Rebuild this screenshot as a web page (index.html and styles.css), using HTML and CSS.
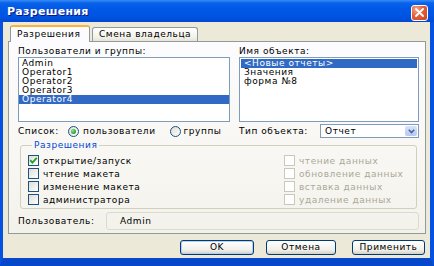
FILE: index.html
```html
<!DOCTYPE html>
<html lang="ru">
<head>
    <meta charset="UTF-8">
    <title>Разрешения</title>
    <link rel="stylesheet" href="styles.css">
</head>
<body>
<div class="window">
    <!-- Заголовок окна -->
    <div class="titlebar">
        <span class="title">Разрешения</span>
        <span class="close">
            <svg width="9" height="9" viewBox="0 0 9 9"><path d="M1 1 L8 8 M8 1 L1 8" stroke="#fff" stroke-width="1.8" stroke-linecap="round"/></svg>
        </span>
    </div>
    <div class="frame">
        <div class="tabs">
            <div class="tab active">Разрешения</div>
            <div class="tab">Смена владельца</div>
        </div>
        <div class="panel">
            <div class="lists">
                <div class="col col-left">
                    <div class="label">Пользователи и группы:</div>
                    <div class="listbox">
                        <div class="item">Admin</div>
                        <div class="item">Operator1</div>
                        <div class="item">Operator2</div>
                        <div class="item">Operator3</div>
                        <div class="item sel">Operator4</div>
                    </div>
                </div>
                <div class="col col-right">
                    <div class="label">Имя объекта:</div>
                    <div class="listbox objects">
                        <div class="item sel">&lt;Новые отчеты&gt;</div>
                        <div class="item">Значения</div>
                        <div class="item">форма №8</div>
                    </div>
                </div>
            </div>
            <div class="options">
                <div class="opt-left">
                    <span class="opt-label">Список:</span>
                    <span class="radio on"></span><span>пользователи</span>
                    <span class="radio second"></span><span>группы</span>
                </div>
                <div class="opt-right">
                    <span>Тип объекта:</span>
                    <div class="combo">
                        <span>Отчет</span>
                        <span class="combo-btn">
                            <svg width="7" height="5" viewBox="0 0 7 5"><path d="M0.8 0.8 L3.5 3.6 L6.2 0.8" fill="none" stroke="#4d6185" stroke-width="1.5"/></svg>
                        </span>
                    </div>
                </div>
            </div>
            <fieldset class="group">
                <legend>Разрешения</legend>
                <div class="checks">
                    <div class="check-col">
                        <div class="check"><span class="box checked"><svg width="9" height="9" viewBox="0 0 9 9"><path d="M1.2 4.2 L3.4 6.6 L7.8 1.8" fill="none" stroke="#21a121" stroke-width="1.8"/></svg></span>открытие/запуск</div>
                        <div class="check"><span class="box"></span>чтение макета</div>
                        <div class="check"><span class="box"></span>изменение макета</div>
                        <div class="check"><span class="box"></span>администратора</div>
                    </div>
                    <div class="check-col disabled">
                        <div class="check"><span class="box"></span>чтение данных</div>
                        <div class="check"><span class="box"></span>обновление данных</div>
                        <div class="check"><span class="box"></span>вставка данных</div>
                        <div class="check"><span class="box"></span>удаление данных</div>
                    </div>
                </div>
            </fieldset>
            <div class="user-row">
                <span class="user-label">Пользователь:</span>
                <div class="user-field">Admin</div>
            </div>
        </div>
        <div class="buttons">
            <div class="btn btn-ok">OK</div>
            <div class="btn btn-cancel">Отмена</div>
            <div class="btn btn-apply">Применить</div>
        </div>
    </div>
</div>
</body>
</html>
```

FILE: styles.css
```css
body {
    margin: 0;
    font-family: "DejaVu Sans", Verdana, sans-serif;
    font-size: 9px;
    letter-spacing: 0.55px;
    color: #000;
    background: #fff;
}
.window {
    width: 434px;
    height: 266px;
    display: flex;
    flex-direction: column;
    overflow: hidden;
}
/* Заголовок */
.titlebar {
    height: 22px;
    flex: none;
    display: flex;
    align-items: center;
    padding: 0 6px 0 7px;
    background: linear-gradient(180deg, #3a8cf6 0, #0862e9 3px, #0058e6 9px, #0055e3 16px, #0049d0 22px);
}
.title {
    flex: 1;
    color: #fff;
    font-weight: bold;
    font-size: 11px;
    letter-spacing: 0.3px;
    text-shadow: 1px 1px 0 #0a1883;
    margin-top: 1px;
}
.close {
    width: 15px;
    height: 14px;
    margin-top: 3px;
    border: 1px solid #fff;
    border-radius: 3px;
    background: radial-gradient(circle at 30% 25%, #f3a58a 0, #e4603a 45%, #c8441e 100%);
    display: flex;
    align-items: center;
    justify-content: center;
}
/* Рамка окна */
.frame {
    flex: 1;
    background: #ece9d8;
    border-left: 3px solid #0552e0;
    border-right: 4px solid #0552e0;
    border-bottom: 8px solid #0747c9;
    padding: 0 4px 0 5px;
    display: flex;
    flex-direction: column;
}
.tabs {
    display: flex;
    align-items: flex-end;
    height: 16px;
    margin-top: 3px;
    padding-left: 2px;
}
.tab {
    height: 13px;
    line-height: 13px;
    padding: 0 6px;
    border: 1px solid #919b9c;
    border-bottom: none;
    border-radius: 3px 3px 0 0;
    background: linear-gradient(#fff, #f3f1ea 70%, #e6e3d6);
    margin-left: 2px;
}
.tab.active {
    height: 15px;
    line-height: 14px;
    width: 66px;
    margin-left: 0;
    margin-bottom: -1px;
    border-top: 2px solid #f9b33d;
    background: #fcfcfe;
    position: relative;
    z-index: 1;
}
.panel {
    height: 193px;
    box-sizing: border-box;
    border: 1px solid #919b9c;
    background: linear-gradient(#fcfcfe, #f7f6f1 70%, #f2f1ea);
    padding: 4px 6px 0 9px;
}
.lists {
    display: flex;
    gap: 9px;
}
.col-left {
    width: 212px;
}
.col-right {
    width: 180px;
}
.label {
    height: 11px;
    line-height: 11px;
}
.listbox {
    height: 65px;
    box-sizing: border-box;
    border: 1px solid #7f9db9;
    background: #fff;
    padding-top: 1px;
}
.item {
    height: 9px;
    line-height: 9px;
    padding-left: 3px;
    white-space: nowrap;
}
.item.sel {
    background: #316ac5;
    color: #fff;
}
.objects .item {
    padding-left: 4px;
}
.objects .item.sel {
    margin: 0 1px;
    padding-left: 3px;
}
/* Список / тип объекта */
.options {
    display: flex;
    justify-content: space-between;
    align-items: center;
    height: 14px;
    margin-top: 2px;
}
.opt-left,
.opt-right {
    display: flex;
    align-items: center;
}
.opt-label {
    width: 50px;
}
.radio {
    width: 9px;
    height: 9px;
    border: 1px solid #1c5180;
    border-radius: 50%;
    background: linear-gradient(135deg, #dcdcd7, #fff);
    margin-right: 4px;
    display: flex;
    align-items: center;
    justify-content: center;
}
.radio.on::after {
    content: "";
    width: 5px;
    height: 5px;
    border-radius: 50%;
    background: radial-gradient(circle at 35% 35%, #8ee28e, #21a121 70%);
}
.radio.second {
    margin-left: 14px;
    margin-right: 3px;
}
.opt-right {
    width: 180px;
}
.combo {
    margin-left: auto;
    width: 99px;
    height: 14px;
    box-sizing: border-box;
    border: 1px solid #7f9db9;
    background: #fff;
    display: flex;
    align-items: center;
    padding-left: 4px;
}
.combo span:first-child {
    flex: 1;
}
.combo-btn {
    width: 12px;
    height: 10px;
    margin-right: 1px;
    border-radius: 2px;
    background: linear-gradient(#d7e3fd, #b4c8f6);
    display: flex;
    align-items: center;
    justify-content: center;
}
/* Группа разрешений */
.group {
    margin: 2px 2px 0;
    padding: 0 0 0 7px;
    height: 69px;
    box-sizing: border-box;
    border: 1px solid #d0d0bf;
    border-radius: 3px;
}
.group legend {
    color: #0046d5;
    padding: 0 2px;
    margin-left: 4px;
    line-height: 10px;
}
.checks {
    display: flex;
    padding-top: 4px;
}
.check-col:first-child {
    width: 256px;
}
.check {
    height: 13px;
    display: flex;
    align-items: center;
}
.box {
    width: 11px;
    height: 11px;
    box-sizing: border-box;
    border: 1px solid #1c5180;
    background: linear-gradient(135deg, #dcdcd7, #fff);
    margin-right: 4px;
    display: flex;
    align-items: center;
    justify-content: center;
}
.disabled {
    color: #aca899;
}
.disabled .box {
    border-color: #cac8bb;
    background: #fff;
}
/* Пользователь */
.user-row {
    display: flex;
    align-items: center;
    margin-top: 3px;
}
.user-label {
    width: 88px;
}
.user-field {
    flex: 1;
    height: 18px;
    line-height: 16px;
    box-sizing: border-box;
    border: 1px solid #dcdacd;
    border-radius: 3px;
    padding-left: 13px;
}
/* Кнопки */
.buttons {
    display: flex;
    justify-content: flex-end;
    margin-top: 6px;
    padding-right: 1px;
}
.btn {
    height: 15px;
    box-sizing: border-box;
    line-height: 13px;
    text-align: center;
    border: 1px solid #003c74;
    border-radius: 3px;
    background: linear-gradient(#fff, #f0efe9 70%, #d6d0c5);
}
.btn-ok {
    width: 74px;
    box-shadow: inset 0 0 0 1px #b6cdf4;
}
.btn-cancel {
    width: 70px;
    margin-left: 12px;
}
.btn-apply {
    width: 73px;
    margin-left: 16px;
}
```
